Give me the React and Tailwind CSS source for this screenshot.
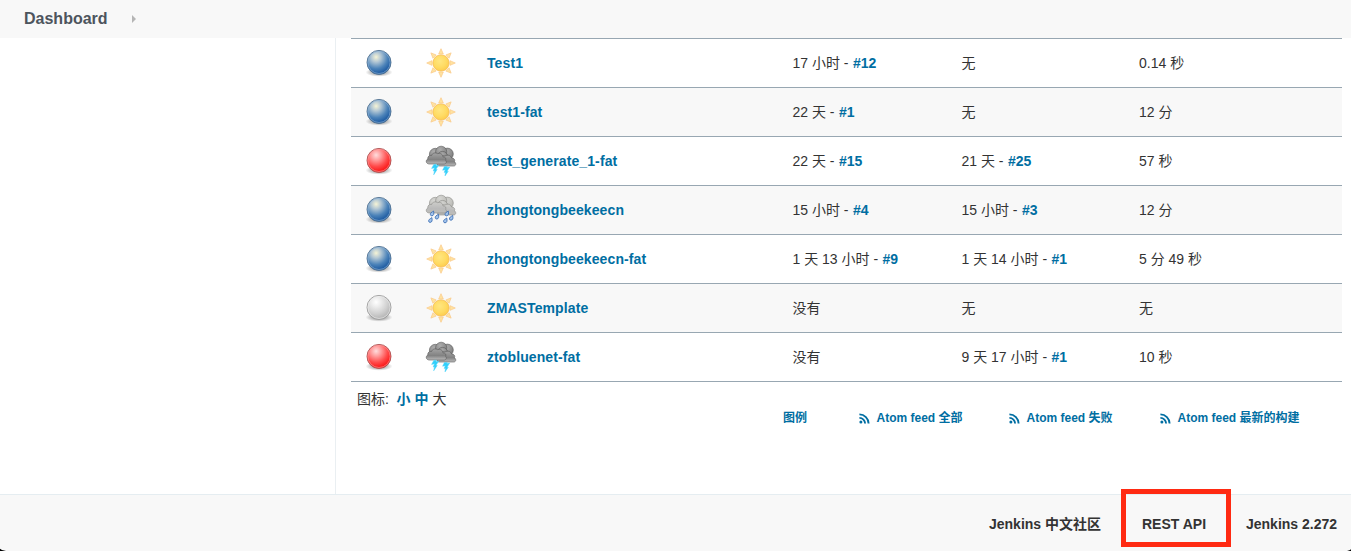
import React from 'react';

const BALL_COLORS = {
  blue: { stops: ['#f6f4d6', '#b3c7d4', '#4c83b9', '#1f5ca2'], edge: '#50708f', rim: '#8fb4d8' },
  red: { stops: ['#ffdcdc', '#ffa0a0', '#ff4a4a', '#fb1a1a'], edge: '#a85454', rim: '#ff9a9a' },
  grey: { stops: ['#ffffff', '#ececec', '#d0d0d0', '#b8b8b8'], edge: '#9a9a9a', rim: '#eeeeee' },
};

function Ball({ color, id }) {
  const c = BALL_COLORS[color];
  return (
    <svg className="block size-8" viewBox="0 0 32 32">
      <defs>
        <radialGradient id={`ball-${id}`} cx="0.38" cy="0.28" r="0.68">
          <stop offset="0" stopColor={c.stops[0]} />
          <stop offset="0.3" stopColor={c.stops[1]} />
          <stop offset="0.7" stopColor={c.stops[2]} />
          <stop offset="1" stopColor={c.stops[3]} />
        </radialGradient>
        <radialGradient id={`shade-${id}`}>
          <stop offset="0.3" stopColor="#000" stopOpacity="0.38" />
          <stop offset="1" stopColor="#000" stopOpacity="0" />
        </radialGradient>
      </defs>
      <ellipse cx="16" cy="25.3" rx="13.5" ry="4.4" fill={`url(#shade-${id})`} />
      <circle cx="16" cy="15.4" r="12" fill={`url(#ball-${id})`} stroke={c.edge} strokeWidth="0.9" />
      <circle cx="16" cy="15.4" r="11.1" fill="none" stroke={c.rim} strokeOpacity="0.65" strokeWidth="0.9" />
    </svg>
  );
}

function Sun({ id }) {
  return (
    <svg className="block size-8" viewBox="0 0 32 32">
      <defs>
        <radialGradient id={`sun-${id}`} cx="0.42" cy="0.38" r="0.65">
          <stop offset="0" stopColor="#ffe680" />
          <stop offset="0.6" stopColor="#ffdb63" />
          <stop offset="1" stopColor="#fdcb4c" />
        </radialGradient>
      </defs>
      {[0, 45, 90, 135, 180, 225, 270, 315].map((a) => (
        <path
          key={a}
          d="M13.7 7 16 1.7 18.3 7Z"
          transform={`rotate(${a} 16 16)`}
          fill="#ffe3a0"
          stroke="#fac988"
          strokeWidth="0.7"
        />
      ))}
      <circle cx="16" cy="16" r="8.1" fill={`url(#sun-${id})`} stroke="#f8bc52" strokeWidth="0.8" />
    </svg>
  );
}

function Cloud({ id, dark }) {
  const edge = dark ? '#5a5a5a' : '#8c8c88';
  return (
    <>
      <defs>
        <radialGradient id={`cloud-${id}`} cx="0.4" cy="0.3" r="0.75">
          <stop offset="0" stopColor={dark ? '#adadad' : '#d6d6d3'} />
          <stop offset="0.65" stopColor={dark ? '#8c8c8c' : '#c2c2be'} />
          <stop offset="1" stopColor={dark ? '#777777' : '#b0b0ac'} />
        </radialGradient>
        <linearGradient id={`base-${id}`} x1="0" y1="0" x2="0" y2="1">
          <stop offset="0" stopColor={dark ? '#a3a3a3' : '#cdcdca'} />
          <stop offset="0.6" stopColor={dark ? '#828282' : '#bababa'} />
          <stop offset="1" stopColor={dark ? '#bcbcbc' : '#bdbdba'} />
        </linearGradient>
      </defs>
      <g stroke={edge} strokeWidth="0.6" strokeLinejoin="round">
        <g fill={`url(#cloud-${id})`}>
          <circle cx="10.3" cy="9.2" r="5.9" />
          <circle cx="22.4" cy="9" r="5.9" />
          <circle cx="16.2" cy="6.8" r="5.6" />
          <circle cx="17.6" cy="11.4" r="5" />
        </g>
        <path
          d="M13 20.8C11 17.5 12.2 14.8 15 14.2 14.9 11.4 17.6 10 20 11 22.3 9.3 26 10.3 26.5 13 29 12.8 30.4 15 29.4 16.8 31.4 17.8 31.2 21 28.6 21H15Z"
          fill={`url(#base-${id})`}
        />
        <path
          d="M4.2 19C.9 18.9.3 15.2 2.8 14 2.4 11.4 4.6 9.9 6.6 10.5 7.2 8 10.4 7.1 12.7 8.7 15.6 7.7 17.9 9.4 17.9 11.8 20.6 11.9 21.5 13.8 20.6 15.2 22 16.4 21.4 19 19.2 19Z"
          fill={`url(#base-${id})`}
        />
      </g>
    </>
  );
}

function Storm({ id }) {
  return (
    <svg className="block size-8" viewBox="0 0 32 32">
      <Cloud id={id} dark />
      <g fill="#2fd0fb" stroke="#4fd2f8" strokeWidth="0.5">
        <path d="M8.8 19.4 6.6 23.4 9.5 22.8 8.2 26 9.5 25.7 8.7 29.8 12.2 24.4 10.8 24.6 13.8 20 10.9 20.7 11.4 19.2Z" />
        <path d="M19.4 21.6 17.6 25.2 20.3 24.7 19.1 27.4 20.5 27.2 20 30.9 23.3 26.2 21.9 26.4 24.7 22 21.8 22.6 22.3 21.4Z" />
      </g>
    </svg>
  );
}

const DROPS = [
  [7.1, 19.6],
  [12, 22.8],
  [5.4, 26.2],
  [21.8, 19.6],
  [26.2, 24],
  [20.3, 26.6],
];

function Rain({ id }) {
  return (
    <svg className="block size-8" viewBox="0 0 32 32">
      <Cloud id={id} />
      {DROPS.map(([x, y]) => (
        <path
          key={`${x}-${y}`}
          d="M1.4-2.6C2.2.2 1.6 2.2-.3 2.2-2 2.2-2.2.2-1-.9-.2-1.6.8-1.9 1.4-2.6Z"
          transform={`translate(${x} ${y})`}
          fill="#a3c4ec"
          stroke="#3f70b4"
          strokeWidth="0.9"
        />
      ))}
    </svg>
  );
}

const WEATHER = { sun: Sun, storm: Storm, rain: Rain };

const JOBS = [
  { ball: 'blue', weather: 'sun', name: 'Test1', success: ['17 小时', '#12'], failure: ['无'], duration: '0.14 秒' },
  { ball: 'blue', weather: 'sun', name: 'test1-fat', success: ['22 天', '#1'], failure: ['无'], duration: '12 分' },
  { ball: 'red', weather: 'storm', name: 'test_generate_1-fat', success: ['22 天', '#15'], failure: ['21 天', '#25'], duration: '57 秒' },
  { ball: 'blue', weather: 'rain', name: 'zhongtongbeekeecn', success: ['15 小时', '#4'], failure: ['15 小时', '#3'], duration: '12 分' },
  { ball: 'blue', weather: 'sun', name: 'zhongtongbeekeecn-fat', success: ['1 天 13 小时', '#9'], failure: ['1 天 14 小时', '#1'], duration: '5 分 49 秒' },
  { ball: 'grey', weather: 'sun', name: 'ZMASTemplate', success: ['没有'], failure: ['无'], duration: '无' },
  { ball: 'red', weather: 'storm', name: 'ztobluenet-fat', success: ['没有'], failure: ['9 天 17 小时', '#1'], duration: '10 秒' },
];

function Build({ value: [time, build] }) {
  return (
    <span className="whitespace-nowrap">
      {time}
      {build && (
        <>
          {' - '}
          <a className="ml-[0.5px] font-bold text-[#006ea2]">{build}</a>
        </>
      )}
    </span>
  );
}

function JobRow({ job, index }) {
  const Weather = WEATHER[job.weather];
  return (
    <div
      className={`grid h-[49px] grid-cols-[62px_62px_305.5px_169px_177.5px_1fr] items-center border-b border-[#98a7b2] pl-3 ${
        index % 2 ? 'bg-[#f8f8f8]' : 'bg-white'
      }`}
    >
      <Ball color={job.ball} id={index} />
      <Weather id={index} />
      <a className="font-bold tracking-[0.1px] text-[#006ea2]">{job.name}</a>
      <Build value={job.success} />
      <Build value={job.failure} />
      <span>{job.duration}</span>
    </div>
  );
}

function Feed({ children }) {
  return (
    <a className="flex items-center gap-[6.5px] whitespace-nowrap">
      <svg className="block size-[11px]" viewBox="0 0 11 11" fill="none" stroke="currentColor" strokeWidth="1.9">
        <circle cx="1.9" cy="9.1" r="1.5" fill="currentColor" stroke="none" />
        <path d="M.4 4.9A5.7 5.7 0 0 1 6.1 10.6M.4 1.4A9.2 9.2 0 0 1 9.6 10.6" />
      </svg>
      <span>{children}</span>
    </a>
  );
}

export default function App() {
  return (
    <div className="relative flex h-[551px] w-[1351px] flex-col overflow-hidden bg-white font-['Liberation_Sans','Noto_Sans_CJK_SC',sans-serif] text-sm leading-5 text-[#333333]">
      <header className="flex h-[38px] shrink-0 items-center bg-[#f8f8f8] pl-6">
        <a className="w-[108px] text-base font-bold text-[#4d545d]">Dashboard</a>
        <svg className="block h-2 w-1" viewBox="0 0 4 8">
          <path d="M0 0 4 4 0 8Z" fill="#b5b5b5" />
        </svg>
      </header>

      <div className="flex min-h-0 grow">
        <aside className="w-[336px] shrink-0 border-r border-[#eaeff2]" />
        <main className="flex grow flex-col pr-[9px] pl-[15px]">
          <div className="border-t border-[#98a7b2]">
            {JOBS.map((job, i) => (
              <JobRow key={job.name} job={job} index={i} />
            ))}
          </div>
          <div className="mt-[7px] flex h-5 items-center pl-1.5">
            <span className="w-[39.5px]">图标:</span>
            <span className="flex gap-1">
              <a className="font-bold text-[#006ea2]">小</a>
              <a className="font-bold text-[#006ea2]">中</a>
              <span>大</span>
            </span>
          </div>
          <div className="-mt-px flex h-5 items-center pl-[432px] text-xs font-bold text-[#006ea2]">
            <a className="w-[76px]">图例</a>
            <div className="w-[150px]"><Feed>Atom feed 全部</Feed></div>
            <div className="w-[151px]"><Feed>Atom feed 失败</Feed></div>
            <Feed>Atom feed 最新的构建</Feed>
          </div>
        </main>
      </div>

      <footer className="flex h-[57px] shrink-0 items-center justify-end border-t border-[#e5edf1] bg-[#f8f8f8] pt-px pr-3.5 font-bold">
        <a className="w-[153px]">Jenkins 中文社区</a>
        <a className="w-[104px]">REST API</a>
        <a className="w-[91px] whitespace-nowrap">Jenkins 2.272</a>
      </footer>

      <div className="absolute top-[489px] left-[1121px] h-[58px] w-[110px] border-5 border-[#ff2a12]" />
      <svg className="absolute bottom-0 left-0 h-[3px] w-1.5" viewBox="0 0 6 3">
        <path d="M0 .8 2 2 6 3H0Z" fill="#000" />
      </svg>
      <svg className="absolute right-0 bottom-0 h-[3px] w-1.5" viewBox="0 0 6 3">
        <path d="M6 1.2 4.5 2.2 2 3H6Z" fill="#000" />
      </svg>
    </div>
  );
}
